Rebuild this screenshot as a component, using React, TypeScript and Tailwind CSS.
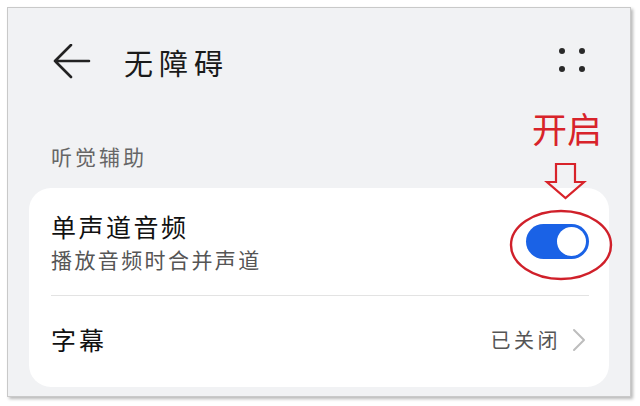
import React from "react";

const font = { fontFamily: '"Noto Sans CJK SC", "Noto Sans", sans-serif' };

export default function App() {
  return (
    <div className="relative w-[640px] h-[406px] bg-white pt-[7px] pl-[7px]" style={font}>
      <div className="w-[624px] h-[390px] bg-[#f1f2f4] border border-[#c9c9c9] shadow-[2px_2px_3px_rgba(0,0,0,0.28)] flex flex-col">
        {/* header */}
        <div className="flex items-center h-[108px] pl-[45px] pr-[45px]">
          <svg width="38" height="36" viewBox="0 0 38 36" className="shrink-0">
            <path d="M2 17 H36 M18 1 L2 17 L18 33" fill="none" stroke="#222" strokeWidth="2.6" strokeLinecap="round" strokeLinejoin="round" />
          </svg>
          <div className="ml-[33px] text-[29px] leading-none tracking-[6px] text-[#1a1a1a]">无障碍</div>
          <div className="ml-auto grid grid-cols-2 gap-x-[14px] gap-y-[12px] -mt-[4px]">
            <span className="w-[6px] h-[6px] rounded-full bg-[#2a2a2a]" />
            <span className="w-[6px] h-[6px] rounded-full bg-[#2a2a2a]" />
            <span className="w-[6px] h-[6px] rounded-full bg-[#2a2a2a]" />
            <span className="w-[6px] h-[6px] rounded-full bg-[#2a2a2a]" />
          </div>
        </div>
        {/* section label */}
        <div className="pl-[43px] h-[72px] pt-[30px] text-[21px] leading-none tracking-[3px] text-[#666]">听觉辅助</div>
        {/* card */}
        <div className="ml-[21px] w-[580px] h-[199px] bg-white rounded-[22px] pl-[22px] pr-[20px] flex flex-col">
          <div className="flex items-center h-[108px] border-b border-[#e3e3e3]">
            <div className="flex flex-col">
              <div className="text-[25px] leading-none tracking-[2.5px] text-[#111]">单声道音频</div>
              <div className="mt-[10px] text-[21px] leading-none tracking-[2.4px] text-[#555]">播放音频时合并声道</div>
            </div>
            <div className="ml-auto w-[63px] h-[35px] rounded-full bg-[#1a62e6] flex items-center justify-end pr-[3px]">
              <div className="w-[29px] h-[29px] rounded-full bg-white" />
            </div>
          </div>
          <div className="flex items-center flex-1 pb-[4px]">
            <div className="text-[25px] leading-none tracking-[3px] text-[#111]">字幕</div>
            <div className="ml-auto text-[20px] leading-none tracking-[3.5px] text-[#555]">已关闭</div>
            <svg width="14" height="24" viewBox="0 0 14 24" className="ml-[11px] mr-[3px]">
              <path d="M2 2 L12 12 L2 22" fill="none" stroke="#bdbdbd" strokeWidth="2" strokeLinecap="round" strokeLinejoin="round" />
            </svg>
          </div>
        </div>
      </div>
      {/* annotations */}
      <div className="absolute left-[532px] top-[106px] text-[35px] leading-[44px] text-[#d8232a]">开启</div>
      <svg className="absolute left-0 top-0" width="640" height="406" viewBox="0 0 640 406">
        <path d="M556 164 H575 V182 H584 L565.5 198 L547 182 H556 Z" fill="none" stroke="#d8232a" strokeWidth="2.2" strokeLinejoin="miter" />
        <ellipse cx="561" cy="245" rx="50" ry="34" fill="none" stroke="#d0202a" strokeWidth="2.4" />
      </svg>
    </div>
  );
}
